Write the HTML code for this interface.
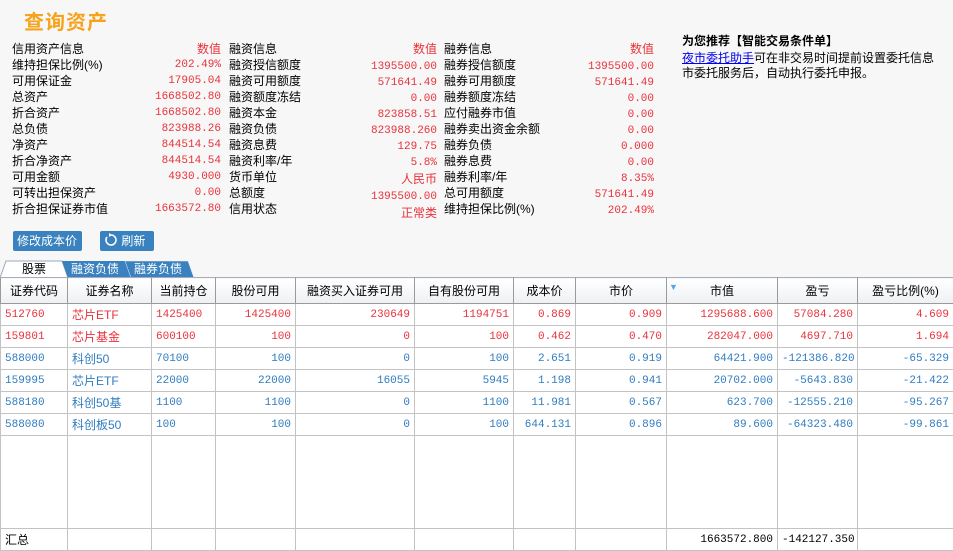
<!DOCTYPE html>
<html><head><meta charset="utf-8"><style>
*{margin:0;padding:0;box-sizing:border-box}
body{width:953px;height:548px;overflow:hidden;background:#f7f7f7;font-family:"Liberation Sans","Noto Sans CJK SC",sans-serif;font-size:12px;color:#000;position:relative}
.a{position:absolute;white-space:nowrap;line-height:16px}
.n{color:#e8323c;font-family:"Liberation Mono","Noto Sans CJK SC",monospace;font-size:11px;text-align:right}
.h{color:#e8323c;text-align:right}
.title{position:absolute;left:24px;top:6px;font-size:20px;font-weight:bold;color:#f7a21b;letter-spacing:1px}
.btn{position:absolute;top:231px;height:20px;background:#3a82bf;color:#fff;border-radius:2px;line-height:20px;font-size:12px;padding:0 4px}
table{position:absolute;left:0;top:277px;width:953px;border-collapse:collapse;background:#fff;table-layout:fixed}
td,th{border:1px solid #c3c3c3;height:22px;padding:0 4px;font-weight:normal;white-space:nowrap;overflow:hidden}
th{height:26px;background:linear-gradient(#fff,#eef0f2);border-color:#9a9a9a;border-top:1px solid #aab;font-size:12px}
td{font-family:"Liberation Mono","Noto Sans CJK SC",monospace;font-size:11px;text-align:right}
td.l{text-align:left}
td.c{font-family:"Liberation Sans","Noto Sans CJK SC",sans-serif;font-size:12px;text-align:left}
tr.r td{color:#e8323c}
tr.b td{color:#2f7cc0}
</style></head><body>
<div class="title">查询资产</div>

<div class="a" style="left:12px;top:41px">信用资产信息<br>维持担保比例(%)<br>可用保证金<br>总资产<br>折合资产<br>总负债<br>净资产<br>折合净资产<br>可用金额<br>可转出担保资产<br>折合担保证券市值</div>
<div class="a h" style="left:160px;width:61px;top:41px">数值</div>
<div class="a n" style="left:110px;width:111px;top:57px">202.49%<br>17905.04<br>1668502.80<br>1668502.80<br>823988.26<br>844514.54<br>844514.54<br>4930.000<br>0.00<br>1663572.80</div>

<div class="a" style="left:229px;top:41px">融资信息<br>融资授信额度<br>融资可用额度<br>融资额度冻结<br>融资本金<br>融资负债<br>融资息费<br>融资利率/年<br>货币单位<br>总额度<br>信用状态</div>
<div class="a" style="left:320px;width:117px;top:41px;text-align:right;color:#e8323c;font-family:'Liberation Mono','Noto Sans CJK SC',monospace;font-size:11px"><span style="font-family:'Liberation Sans','Noto Sans CJK SC',sans-serif;font-size:12px">数值</span><br>1395500.00<br>571641.49<br>0.00<br>823858.51<br>823988.260<br>129.75<br>5.8%<br><span style="font-family:'Liberation Sans','Noto Sans CJK SC',sans-serif;font-size:12px">人民币</span><br>1395500.00<br><span style="font-family:'Liberation Sans','Noto Sans CJK SC',sans-serif;font-size:12px">正常类</span></div>

<div class="a" style="left:444px;top:41px">融券信息<br>融券授信额度<br>融券可用额度<br>融券额度冻结<br>应付融券市值<br>融券卖出资金余额<br>融券负债<br>融券息费<br>融券利率/年<br>总可用额度<br>维持担保比例(%)</div>
<div class="a" style="left:540px;width:114px;top:41px;text-align:right;color:#e8323c;font-family:'Liberation Mono','Noto Sans CJK SC',monospace;font-size:11px"><span style="font-family:'Liberation Sans','Noto Sans CJK SC',sans-serif;font-size:12px">数值</span><br>1395500.00<br>571641.49<br>0.00<br>0.00<br>0.00<br>0.000<br>0.00<br>8.35%<br>571641.49<br>202.49%</div>

<div class="a" style="left:682px;top:33px;font-weight:bold">为您推荐【智能交易条件单】</div>
<div class="a" style="left:682px;top:51px;line-height:15px"><span style="color:#00e;text-decoration:underline">夜市委托助手</span>可在非交易时间提前设置委托信息<br>市委托服务后，自动执行委托申报。</div>

<div class="btn" style="left:13px;width:69px">修改成本价</div>
<div class="btn" style="left:100px;width:54px;padding-left:4px"><svg width="14" height="14" viewBox="0 0 14 14" style="vertical-align:-2px"><path d="M3 4 A5 5 0 1 0 7 2" fill="none" stroke="#fff" stroke-width="1.6"/><path d="M5 0 L8 2 L5 4 Z" fill="#fff"/></svg> 刷新</div>

<svg class="a" style="left:0;top:259px" width="200" height="20"><path d="M0 19 L6 2 L62 2 L68 19 Z" fill="#fff" stroke="#9ab" stroke-width="1"/><path d="M62 2 L125 2 L131 19 L68 19 Z" fill="#3a82bf"/><path d="M125 2 L188 2 L194 19 L131 19 Z" fill="#3a82bf" stroke="#eef" stroke-width="0.5"/></svg>
<div class="a" style="left:22px;top:261px">股票</div>
<div class="a" style="left:71px;top:261px;color:#fff">融资负债</div>
<div class="a" style="left:134px;top:261px;color:#fff">融券负债</div>

<table>
<colgroup><col style="width:67px"><col style="width:84px"><col style="width:64px"><col style="width:80px"><col style="width:119px"><col style="width:99px"><col style="width:62px"><col style="width:91px"><col style="width:111px"><col style="width:80px"><col style="width:96px"></colgroup>
<tr><th>证券代码</th><th>证券名称</th><th>当前持仓</th><th>股份可用</th><th>融资买入证券可用</th><th>自有股份可用</th><th>成本价</th><th>市价</th><th style="position:relative"><span style="position:absolute;left:2px;top:4px;color:#5aa7e6;font-size:9px">▼</span>市值</th><th>盈亏</th><th>盈亏比例(%)</th></tr>
<tr class="r"><td class="l">512760</td><td class="c">芯片ETF</td><td class="l">1425400</td><td>1425400</td><td>230649</td><td>1194751</td><td>0.869</td><td>0.909</td><td>1295688.600</td><td>57084.280</td><td>4.609</td></tr>
<tr class="r"><td class="l">159801</td><td class="c">芯片基金</td><td class="l">600100</td><td>100</td><td>0</td><td>100</td><td>0.462</td><td>0.470</td><td>282047.000</td><td>4697.710</td><td>1.694</td></tr>
<tr class="b"><td class="l">588000</td><td class="c">科创50</td><td class="l">70100</td><td>100</td><td>0</td><td>100</td><td>2.651</td><td>0.919</td><td>64421.900</td><td>-121386.820</td><td>-65.329</td></tr>
<tr class="b"><td class="l">159995</td><td class="c">芯片ETF</td><td class="l">22000</td><td>22000</td><td>16055</td><td>5945</td><td>1.198</td><td>0.941</td><td>20702.000</td><td>-5643.830</td><td>-21.422</td></tr>
<tr class="b"><td class="l">588180</td><td class="c">科创50基</td><td class="l">1100</td><td>1100</td><td>0</td><td>1100</td><td>11.981</td><td>0.567</td><td>623.700</td><td>-12555.210</td><td>-95.267</td></tr>
<tr class="b"><td class="l">588080</td><td class="c">科创板50</td><td class="l">100</td><td>100</td><td>0</td><td>100</td><td>644.131</td><td>0.896</td><td>89.600</td><td>-64323.480</td><td>-99.861</td></tr>
<tr><td style="height:93px"></td><td></td><td></td><td></td><td></td><td></td><td></td><td></td><td></td><td></td><td></td></tr>
<tr><td class="c">汇总</td><td></td><td></td><td></td><td></td><td></td><td></td><td></td><td>1663572.800</td><td>-142127.350</td><td></td></tr>
</table>
</body></html>
